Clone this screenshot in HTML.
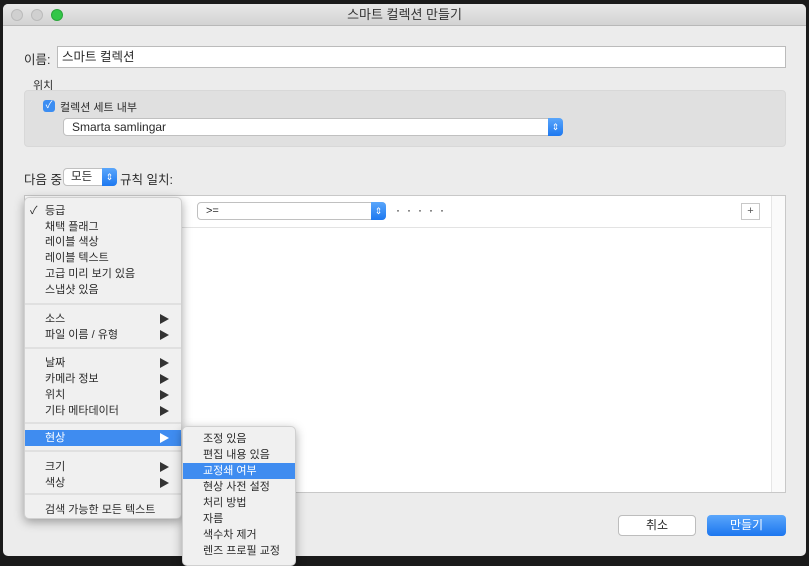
<!DOCTYPE html>
<html><head><meta charset="utf-8"><style>
*{margin:0;padding:0;box-sizing:border-box}
body{width:809px;height:561px;background:#1a1a1a;position:relative;overflow:hidden;font-family:"Liberation Sans","Noto Sans CJK KR",sans-serif;font-size:12px;color:#2a2a2a}
.a{position:absolute}
.win{left:3px;top:4px;width:803px;height:552px;background:#ececec;border-radius:5px;overflow:hidden}
.tb{left:0;top:0;width:803px;height:22px;background:linear-gradient(#e8e8e8,#d3d3d3);border-bottom:1px solid #b8b8b8;text-align:center;font-size:13px;line-height:22px;color:#333}
.dot{width:12px;height:12px;border-radius:50%;top:5px}
.menu{background:#f0f0f0;border-radius:5px;box-shadow:0 3px 10px rgba(0,0,0,.35);border:1px solid #d0d0d0}
.it{position:absolute;left:0;right:0;height:16px;line-height:16px;padding-left:20px;font-size:11px;color:#2a2a2a}
.hl{background:#3f8cf0;color:#fff}
.ar{position:absolute;right:12px;top:3px;width:0;height:0;border-left:9px solid #333;border-top:5px solid transparent;border-bottom:5px solid transparent}
.hl .ar{border-left-color:#fff}
.sep{position:absolute;left:0;right:0;height:2px;background:#e0e0e0}
.blue{background:linear-gradient(#5aa6fb,#1d78f0);border-radius:0 4px 4px 0}
</style></head><body>
<div class="a win">
 <div class="a tb">스마트 컬렉션 만들기</div>
 <div class="a dot" style="left:8px;background:#d0d0d0;border:1px solid #bbb"></div>
 <div class="a dot" style="left:28px;background:#d0d0d0;border:1px solid #bbb"></div>
 <div class="a dot" style="left:48px;background:#33c648;border:1px solid #2aa53a"></div>
</div>
<div class="a" style="left:24px;top:49px;font-size:12.5px">이름:</div>
<div class="a" style="left:57px;top:46px;width:729px;height:22px;background:#fff;border:1px solid #bbb;padding-left:4px;line-height:20px;font-size:12.5px">스마트 컬렉션</div>
<div class="a" style="left:33px;top:77px;font-size:11px">위치</div>
<div class="a" style="left:24px;top:90px;width:762px;height:57px;background:#e0e0e0;border-radius:4px;border:1px solid #d8d8d8"></div>
<div class="a" style="left:43px;top:100px;width:12px;height:12px;background:#3b8df2;border-radius:3px;color:#fff;font-size:10px;line-height:12px;text-align:center">✓</div>
<div class="a" style="left:60px;top:99px;font-size:11px">컬렉션 세트 내부</div>
<div class="a" style="left:63px;top:118px;width:500px;height:18px;background:#fff;border:1px solid #c0c0c0;border-radius:4px;padding-left:8px;line-height:16px;font-size:12px">Smarta samlingar</div>
<div class="a blue" style="left:548px;top:118px;width:15px;height:18px;color:#fff;font-size:9px;text-align:center;line-height:18px">⇕</div>
<div class="a" style="left:24px;top:169px;font-size:12.5px">다음 중</div>
<div class="a" style="left:63px;top:168px;width:54px;height:18px;background:#fff;border:1px solid #c0c0c0;border-radius:4px;padding-left:7px;line-height:16px;font-size:11.5px">모든</div>
<div class="a blue" style="left:102px;top:168px;width:15px;height:18px;color:#fff;font-size:9px;text-align:center;line-height:18px">⇕</div>
<div class="a" style="left:120px;top:169px;font-size:12.5px">규칙 일치:</div>
<div class="a" style="left:24px;top:195px;width:762px;height:298px;background:#fff;border:1px solid #c8c8c8"></div>
<div class="a" style="left:771px;top:196px;width:14px;height:296px;background:#fafafa;border-left:1px solid #e6e6e6"></div>
<div class="a" style="left:25px;top:227px;width:746px;height:1px;background:#e3e3e3"></div>
<div class="a" style="left:197px;top:202px;width:189px;height:18px;background:#fff;border:1px solid #c0c0c0;border-radius:4px;padding-left:8px;line-height:16px;font-size:11px">&gt;=</div>
<div class="a blue" style="left:371px;top:202px;width:15px;height:18px;color:#fff;font-size:9px;text-align:center;line-height:18px">⇕</div>
<div class="a" style="left:396px;top:203px;font-size:12px;letter-spacing:7px;color:#000">·····</div>
<div class="a" style="left:741px;top:203px;width:19px;height:17px;border:1px solid #c8c8c8;background:#fff;text-align:center;line-height:15px;font-size:11px;color:#555">+</div>
<div class="a" style="left:618px;top:515px;width:78px;height:21px;background:#fff;border:1px solid #bdbdbd;border-radius:4px;text-align:center;line-height:19px;font-size:12px">취소</div>
<div class="a" style="left:707px;top:515px;width:79px;height:21px;background:linear-gradient(#5aa6fb,#1c76ef);border-radius:4px;text-align:center;line-height:21px;font-size:12px;color:#fff">만들기</div>

<div class="a menu" style="left:24px;top:197px;width:158px;height:322px">
 <div class="it" style="top:5px"><span style="position:absolute;left:5px">✓</span>등급</div>
 <div class="it" style="top:21px">채택 플래그</div>
 <div class="it" style="top:36px">레이블 색상</div>
 <div class="it" style="top:52px">레이블 텍스트</div>
 <div class="it" style="top:68px">고급 미리 보기 있음</div>
 <div class="it" style="top:84px">스냅샷 있음</div>
 <div class="sep" style="top:105px"></div>
 <div class="it" style="top:113px">소스<i class="ar"></i></div>
 <div class="it" style="top:129px">파일 이름 / 유형<i class="ar"></i></div>
 <div class="sep" style="top:149px"></div>
 <div class="it" style="top:157px">날짜<i class="ar"></i></div>
 <div class="it" style="top:173px">카메라 정보<i class="ar"></i></div>
 <div class="it" style="top:189px">위치<i class="ar"></i></div>
 <div class="it" style="top:205px">기타 메타데이터<i class="ar"></i></div>
 <div class="sep" style="top:224px"></div>
 <div class="it hl" style="top:232px">현상<i class="ar"></i></div>
 <div class="sep" style="top:252px"></div>
 <div class="it" style="top:261px">크기<i class="ar"></i></div>
 <div class="it" style="top:277px">색상<i class="ar"></i></div>
 <div class="sep" style="top:295px"></div>
 <div class="it" style="top:304px">검색 가능한 모든 텍스트</div>
</div>
<div class="a menu" style="left:182px;top:426px;width:114px;height:140px">
 <div class="it" style="top:4px">조정 있음</div>
 <div class="it" style="top:20px">편집 내용 있음</div>
 <div class="it hl" style="top:36px">교정쇄 여부</div>
 <div class="it" style="top:52px">현상 사전 설정</div>
 <div class="it" style="top:68px">처리 방법</div>
 <div class="it" style="top:84px">자름</div>
 <div class="it" style="top:100px">색수차 제거</div>
 <div class="it" style="top:116px">렌즈 프로필 교정</div>
</div>
</body></html>
